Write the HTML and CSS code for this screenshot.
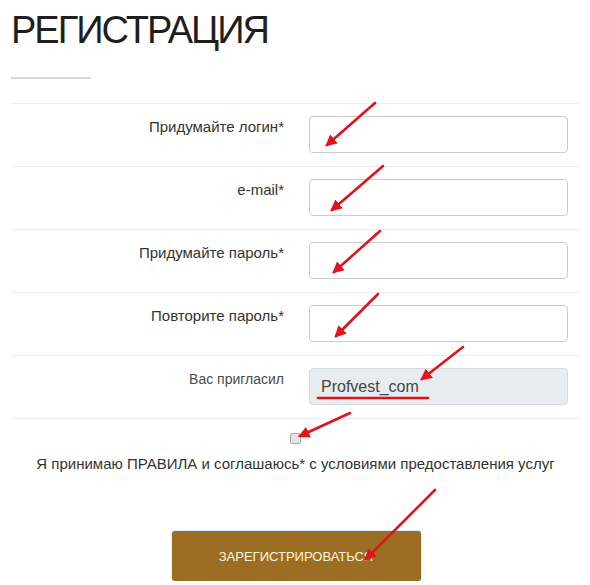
FILE: index.html
```html
<!DOCTYPE html>
<html lang="ru">

<head>
    <meta charset="UTF-8" />
    <meta name="viewport" content="width=device-width, initial-scale=1.0" />
    <title>Регистрация</title>

    <link rel="stylesheet" href="styles.css">
</head>

<body>
    <div class="page">
        <h1 class="title">РЕГИСТРАЦИЯ</h1>
        <div class="title-line"></div>

        <form class="reg-form">
            <div class="row">
                <label for="login">Придумайте логин*</label>
                <input type="text" id="login" />
            </div>
            <div class="row">
                <label for="email">e-mail*</label>
                <input type="text" id="email" />
            </div>
            <div class="row">
                <label for="pass">Придумайте пароль*</label>
                <input type="password" id="pass" />
            </div>
            <div class="row">
                <label for="pass2">Повторите пароль*</label>
                <input type="password" id="pass2" />
            </div>
            <div class="row">
                <label for="ref" class="small">Вас пригласил</label>
                <input type="text" id="ref" class="readonly" value="Profvest_com" readonly />
            </div>

            <div class="agree">
                <input type="checkbox" id="rules" />
                <p>Я принимаю ПРАВИЛА и соглашаюсь* с условиями предоставления услуг</p>
            </div>

            <div class="submit-wrap">
                <button type="submit">ЗАРЕГИСТРИРОВАТЬСЯ</button>
            </div>
        </form>
    </div>

    <!-- red annotation arrows drawn over the screenshot -->
    <svg class="marks" width="590" height="585" viewBox="0 0 590 585">
        <defs>
            <marker id="head" viewBox="0 0 10 10" refX="8" refY="5" markerWidth="4.5" markerHeight="4.5" orient="auto">
                <path d="M0 0 L10 5 L0 10 z" fill="#e0141c" />
            </marker>
        </defs>
        <g stroke="#e0141c" stroke-width="2.6" stroke-linecap="round" marker-end="url(#head)">
            <line x1="375" y1="103" x2="327" y2="145" />
            <line x1="383" y1="166" x2="332" y2="210" />
            <line x1="380" y1="231" x2="334" y2="272" />
            <line x1="378" y1="294" x2="336" y2="336" />
            <line x1="463" y1="347" x2="422" y2="379" />
            <line x1="350" y1="413" x2="300" y2="436" />
            <line x1="435" y1="490" x2="366" y2="559" />
        </g>
        <line x1="318" y1="398" x2="428" y2="398" stroke="#d8141c" stroke-width="2.6" stroke-linecap="round" />
    </svg>
</body>

</html>
```

FILE: styles.css
```css
body {
    margin: 0;
    background-color: #fff;
    font-family: "Liberation Sans", Arial, sans-serif;
    color: #333;
}

.page {
    width: 569px;
    padding-left: 11px;
}

.title {
    margin: 0;
    padding-top: 8px;
    font-size: 38px;
    letter-spacing: -2px;
    font-weight: normal;
    line-height: 44px;
    color: #1e1e1e;
}

.title-line {
    width: 80px;
    height: 2px;
    margin-top: 25px;
    background-color: #d6d6d6;
}

.reg-form {
    margin-top: 24px;
}

.row {
    display: grid;
    grid-template-columns: 273px 259px;
    column-gap: 25px;
    align-items: start;
    height: 63px;
    padding-top: 12px;
    box-sizing: border-box;
    border-top: 1px solid #ececec;
}

.row label {
    text-align: right;
    font-size: 15px;
    line-height: 20px;
    padding-top: 1px;
    color: #333;
}

.row label.small {
    font-size: 14px;
    padding-top: 1px;
    color: #4a4a4a;
}

.row input {
    height: 37px;
    box-sizing: border-box;
    border: 1px solid #ccc;
    border-radius: 4px;
    padding: 0 11px;
    font-family: inherit;
    font-size: 16px;
    color: #444;
    background-color: #fff;
}

.row input.readonly {
    background-color: #e9ecef;
    border-color: #d5d9dd;
}

.agree {
    border-top: 1px solid #ececec;
    text-align: center;
    padding-top: 14px;
}

.agree input {
    appearance: none;
    width: 11px;
    height: 11px;
    margin: 0 0 0 279px;
    display: block;
    border: 1px solid #a9a9a9;
    border-radius: 2px;
    background-color: #e4e4e4;
}

.agree p {
    margin: 10px 0 0;
    font-size: 15px;
    line-height: 20px;
    color: #333;
}

.submit-wrap {
    padding-top: 57px;
    text-align: center;
}

button {
    width: 249px;
    height: 50px;
    margin-left: 1px;
    background-color: #9c6e24;
    color: #fff6dc;
    border: none;
    border-radius: 3px;
    box-shadow: 0 0 0 1px #d9eef5;
    font-family: inherit;
    font-size: 13px;
    cursor: pointer;
}

.marks {
    position: absolute;
    left: 0;
    top: 0;
    pointer-events: none;
}
```
